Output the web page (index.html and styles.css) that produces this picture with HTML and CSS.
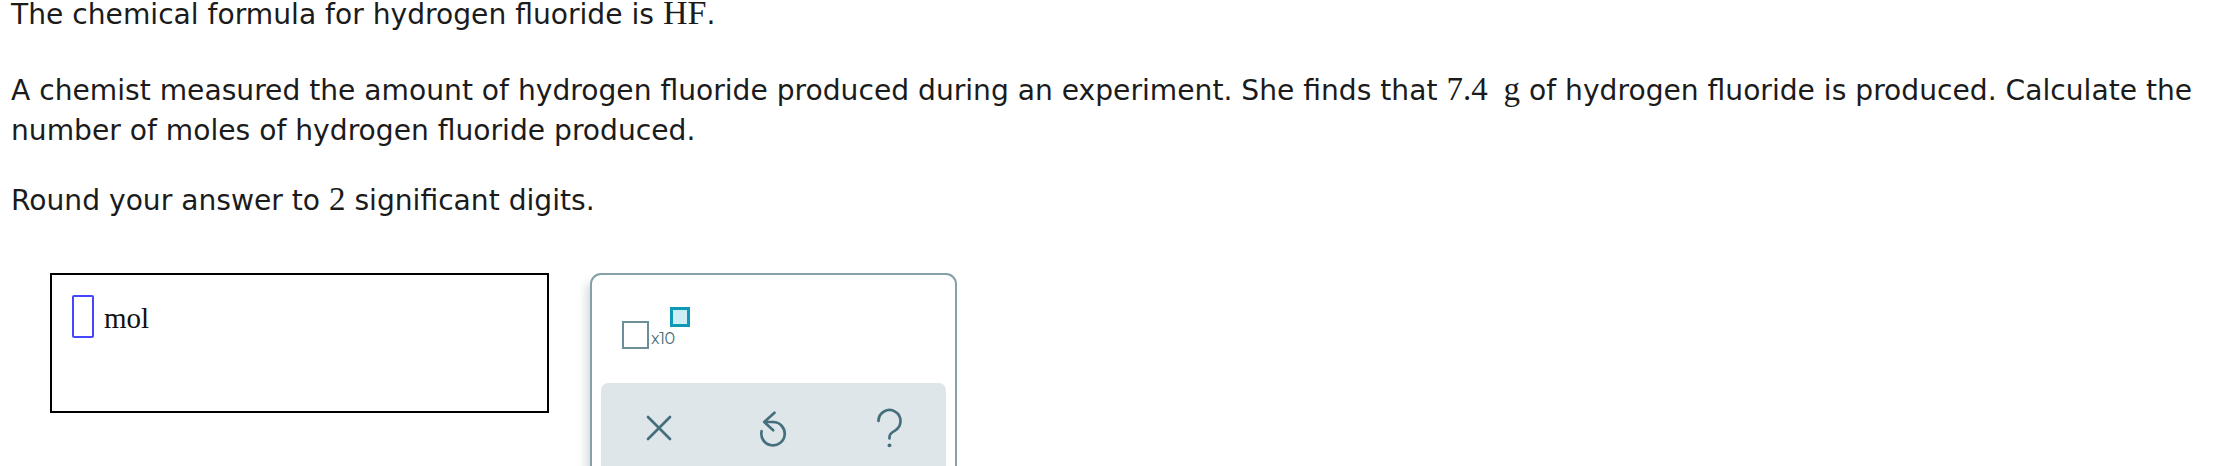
FILE: index.html
```html
<!DOCTYPE html>
<html>
<head>
<meta charset="utf-8">
<link rel="stylesheet" href="styles.css">
</head>
<body>
<div class="question">
  <p class="line first">The chemical formula for hydrogen fluoride is <span class="math big">HF</span>.</p>
  <p class="line second">A chemist measured the amount of hydrogen fluoride produced during an experiment. She finds that <span class="math">7.4</span> <span class="math unit-g">g</span> of hydrogen fluoride is produced. Calculate the number of moles of hydrogen fluoride produced.</p>
  <p class="line third">Round your answer to <span class="math">2</span> significant digits.</p>

  <div class="answer-row">
    <div class="answer-box">
      <span class="cursor"></span>
      <span class="unit">mol</span>
    </div>
    <div class="panel">
      <div class="tools">
        <div class="sci">
          <span class="sci-base"></span>
          <span class="sci-x">x10</span>
          <span class="sci-exp"></span>
        </div>
      </div>
      <div class="actions">
        <button class="act" aria-label="clear">
          <svg width="26" height="26" viewBox="0 0 26 26"><path d="M2 2 L24 24 M24 2 L2 24" fill="none" stroke="#456f7c" stroke-width="2.7" stroke-linecap="round"/></svg>
        </button>
        <button class="act" aria-label="undo">
          <svg width="30" height="42" viewBox="0 0 30 42"><path d="M14 15 A11.7 11.7 0 1 1 2.6 24.2" fill="none" stroke="#456f7c" stroke-width="2.7" stroke-linecap="round"/><path d="M15.5 5.7 L5.2 15 L14.2 23.3 M5.2 15 L14 15" fill="none" stroke="#456f7c" stroke-width="2.7" stroke-linecap="round" stroke-linejoin="round"/></svg>
        </button>
        <button class="act" aria-label="help">
          <svg width="36" height="44" viewBox="0 0 36 44"><path d="M7.5 15 A11 11 0 1 1 24 24.6 Q18.5 27.5 18.5 31 L18.5 32.5" fill="none" stroke="#456f7c" stroke-width="2.7" stroke-linecap="round"/><circle cx="18.5" cy="39.3" r="1.9" fill="#456f7c"/></svg>
        </button>
      </div>
    </div>
  </div>
</div>
</body>
</html>
```

FILE: styles.css
```css
html, body {
  margin: 0;
  padding: 0;
  background: #ffffff;
  overflow: hidden;
}

.question {
  padding: 0 0 0 11px;
  font-family: "DejaVu Sans", Verdana, sans-serif;
  font-size: 28.15px;
  color: #1b1b1b;
}

.line {
  margin: 0;
  line-height: 40px;
}

.first {
  line-height: 30px;
}

.second {
  margin-top: 41px;
}

.third {
  margin-top: 30px;
}

.math {
  font-family: "Liberation Serif", "Times New Roman", serif;
  font-size: 33px;
  line-height: 1;
}

.math.big {
  font-size: 34px;
  line-height: 0.7;
}

.unit-g {
  margin-left: 7px;
}

.answer-row {
  display: flex;
  align-items: flex-start;
  gap: 41px;
  margin-top: 52px;
  padding-left: 39px;
}

.answer-box {
  box-sizing: border-box;
  width: 499px;
  height: 140px;
  border: 2px solid #000;
  padding: 20px 0 0 20px;
  display: flex;
  align-items: flex-start;
  gap: 10px;
}

.cursor {
  box-sizing: border-box;
  width: 22px;
  height: 43px;
  border: 2.5px solid #4646ff;
  border-radius: 2px;
}

.unit {
  font-family: "Liberation Serif", "Times New Roman", serif;
  font-size: 29px;
  line-height: 1;
  margin-top: 9px;
  color: #111;
}

.panel {
  box-sizing: border-box;
  width: 367px;
  height: 260px;
  border: 2px solid #84a0a8;
  border-radius: 11px;
  background: #fff;
  padding: 0 9px;
  box-shadow: -7px 6px 9px -3px rgba(40, 60, 70, 0.18);
}

.tools {
  height: 108px;
  padding: 32px 0 0 21px;
  box-sizing: border-box;
}

.sci {
  position: relative;
  display: inline-flex;
  align-items: flex-end;
  height: 42px;
}

.sci-base {
  box-sizing: border-box;
  width: 27px;
  height: 28px;
  border: 2.6px solid #6d8e98;
  display: block;
}

.sci-x {
  font-family: "Montserrat", "Lato", "Open Sans", sans-serif;
  font-size: 16px;
  color: #4a6d78;
  line-height: 1;
  margin-left: 2px;
  margin-bottom: 2px;
  letter-spacing: -0.5px;
}

.sci-exp {
  position: absolute;
  left: 48px;
  top: 0;
  box-sizing: border-box;
  width: 20px;
  height: 20px;
  border: 3px solid #0d9ab4;
  background: #cdeef4;
}

.actions {
  display: grid;
  grid-template-columns: 1fr 1fr 1fr;
  height: 140px;
  background: #dfe6e9;
  border-radius: 7px;
}

.act {
  border: 0;
  background: transparent;
  padding: 0;
  height: 90px;
  display: flex;
  align-items: center;
  justify-content: center;
}

.act svg {
  display: block;
}
```
